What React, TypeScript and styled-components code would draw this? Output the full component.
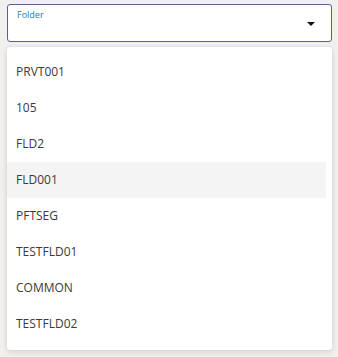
import React from 'react';
import styled, { createGlobalStyle } from 'styled-components';

const GlobalStyle = createGlobalStyle`
  html, body {
    margin: 0;
    padding: 0;
    background: #f1f0ef;
    font-family: 'Open Sans', 'Noto Sans', sans-serif;
  }
`;

const folders = ['PRVT001', '105', 'FLD2', 'FLD001', 'PFTSEG', 'TESTFLD01', 'COMMON', 'TESTFLD02'];

const App = (): JSX.Element => {
  const hovered = 'FLD001';

  return (
    <>
      <GlobalStyle />
      <Page>
        <SelectBox>
          <Label>Folder</Label>
          <Arrow width="8" height="4" viewBox="0 0 8 4">
            <path d="M0 0 L8 0 L4 4 Z" fill="#111" />
          </Arrow>
        </SelectBox>
        <Menu>
          {folders.map((f) => (
            <Item key={f} $active={f === hovered}>
              {f}
            </Item>
          ))}
        </Menu>
      </Page>
    </>
  );
};

export default App;

const Page = styled.div`
  width: 338px;
  height: 357px;
  padding: 4px 6px 0 7px;
  box-sizing: border-box;
  display: flex;
  flex-direction: column;
  gap: 5px;
`;

const SelectBox = styled.div`
  position: relative;
  height: 38px;
  box-sizing: border-box;
  border: 1px solid #5c5f8b;
  border-radius: 3px;
  background: #fff;
  padding: 4px 0 0 9px;
`;

const Label = styled.div`
  font-size: 9px;
  line-height: 12px;
  color: #2a78a8;
`;

const Arrow = styled.svg`
  position: absolute;
  right: 16px;
  top: 17px;
`;

const Menu = styled.div`
  background: #fff;
  border-radius: 3px;
  box-shadow: 0 2px 6px rgba(0, 0, 0, 0.12), 0 0 2px rgba(0, 0, 0, 0.08);
  padding: 7px 6px 8px 0;
  display: flex;
  flex-direction: column;
`;

const Item = styled.div<{ $active?: boolean }>`
  height: 36px;
  box-sizing: border-box;
  padding: 0 0 2px 9px;
  display: flex;
  align-items: center;
  font-size: 12px;
  color: #3a3a3a;
  background: ${(p) => (p.$active ? '#f4f4f4' : 'transparent')};
`;
